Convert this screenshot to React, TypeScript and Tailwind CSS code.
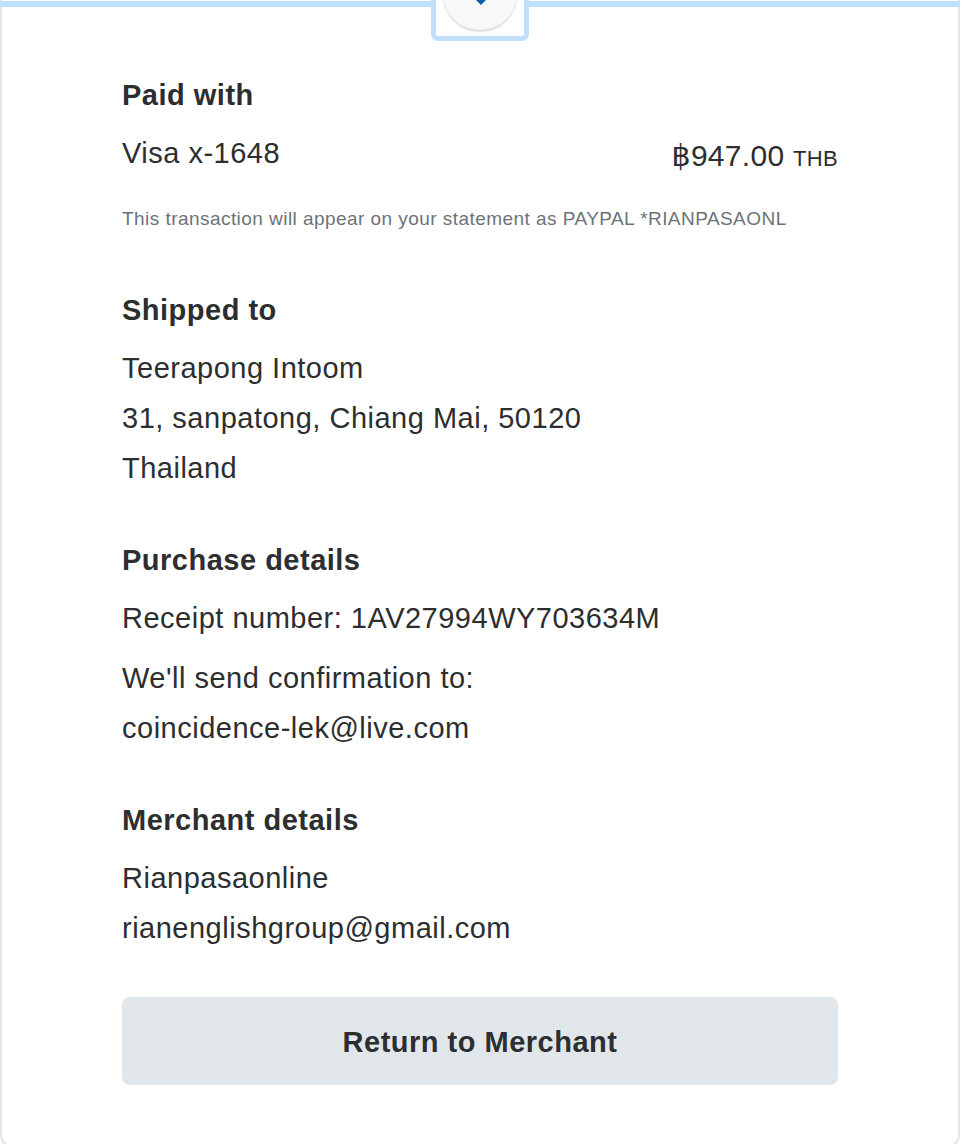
import React from "react";

const Receipt = () => {
  return (
    <div
      className="min-h-[1144px] bg-white text-[#2c2e2f]"
      style={{ fontFamily: '"Liberation Sans", "DejaVu Sans", sans-serif' }}
    >
      <div className="relative w-[960px] rounded-b-[12px] border-x-2 border-b-2 border-[#e4e4e4] bg-white px-[120px] pb-[60px] pt-[75px]">
        {/* - Top bar with notch */}
        <div className="absolute left-[-2px] right-[-2px] top-[1px] h-[6px] bg-[#bfdffc]" />
        <div className="absolute left-[429px] top-0 h-[41px] w-[98px] overflow-hidden rounded-b-[7px] border-[5px] border-t-0 border-[#bfdffc] bg-white">
          <div className="absolute left-[7px] top-[-44px] h-[74px] w-[74px] rounded-full bg-[#f7f8fa] shadow-[0_2px_2px_rgba(0,0,0,0.14)]">
            <svg
              className="absolute left-[31px] top-[41px]"
              width="14"
              height="9"
              viewBox="0 0 14 9"
            >
              <path d="M1 0 L13 0 L13 2 L7 8 L1 2 Z" fill="#0b5fab" />
            </svg>
          </div>
        </div>

        {/* - Paid with */}
        <p className="text-[29px] font-bold leading-[40px] tracking-[0.5px]">Paid with</p>
        <div className="mt-[18px] flex h-[40px] items-start justify-between text-[29px] leading-[40px] tracking-[0.5px]">
          <span>Visa x-1648</span>
          <span className="mt-[3px] text-[30px] tracking-[0.3px]">
            ฿947.00 <span className="text-[22px] tracking-[0.3px]">THB</span>
          </span>
        </div>
        <p className="mt-[34px] text-[19px] leading-[24px] tracking-[0.45px] text-[#6c7378]">
          This transaction will appear on your statement as PAYPAL *RIANPASAONL
        </p>

        {/* - Shipped to */}
        <p className="mt-[59px] text-[29px] font-bold leading-[40px] tracking-[0.5px]">
          Shipped to
        </p>
        <div className="mt-[13px] text-[29px] leading-[50px] tracking-[0.5px]">
          <p>Teerapong Intoom</p>
          <p>31, sanpatong, Chiang Mai, 50120</p>
          <p>Thailand</p>
        </div>

        {/* - Purchase details */}
        <p className="mt-[47px] text-[29px] font-bold leading-[40px] tracking-[0.5px]">
          Purchase details
        </p>
        <p className="mt-[13px] text-[29px] leading-[50px] tracking-[0.5px]">
          Receipt number: 1AV27994WY703634M
        </p>
        <div className="mt-[10px] text-[29px] leading-[50px] tracking-[0.5px]">
          <p>We'll send confirmation to:</p>
          <p>coincidence-lek@live.com</p>
        </div>

        {/* - Merchant details */}
        <p className="mt-[47px] text-[29px] font-bold leading-[40px] tracking-[0.5px]">
          Merchant details
        </p>
        <div className="mt-[13px] text-[29px] leading-[50px] tracking-[0.5px]">
          <p>Rianpasaonline</p>
          <p>rianenglishgroup@gmail.com</p>
        </div>

        <button
          type="button"
          className="mt-[44px] flex h-[88px] w-full items-center justify-center rounded-[8px] bg-[#e1e6ea] pt-[4px] text-[29px] font-bold tracking-[0.5px] text-[#2c2e2f]"
        >
          Return to Merchant
        </button>
      </div>
    </div>
  );
};

export default function App() {
  return <Receipt />;
}
